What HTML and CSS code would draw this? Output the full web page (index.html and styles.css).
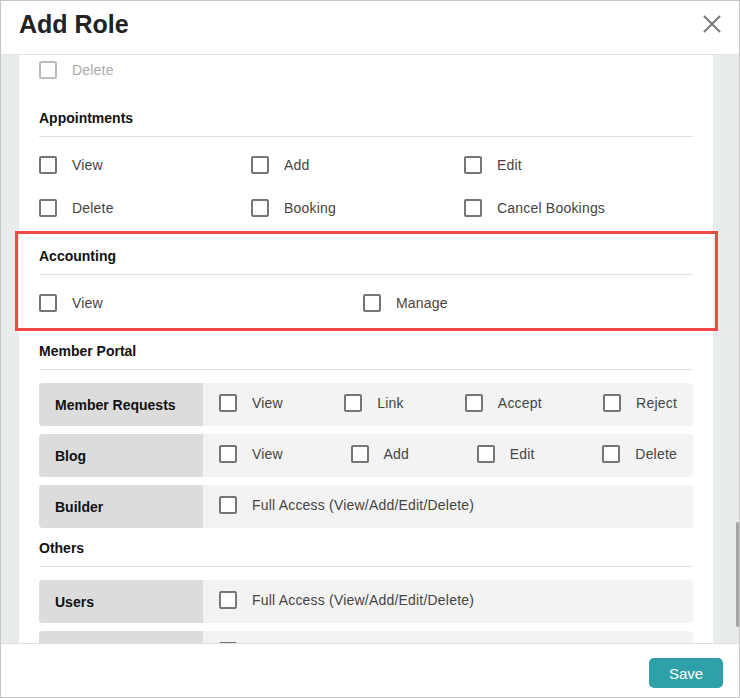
FILE: index.html
```html
<!DOCTYPE html>
<html lang="en">
<head>
    <meta charset="UTF-8">
    <meta name="viewport" content="width=device-width, initial-scale=1.0">
    <title>Add Role</title>
    <link rel="stylesheet" href="styles.css">
</head>
<body>
    <div class="modal">
        <!-- Header -->
        <div class="modal-header">
            <h1>Add Role</h1>
            <button class="close" type="button" aria-label="Close">
                <svg width="18" height="18" viewBox="0 0 18 18"><path d="M1 1L17 17M17 1L1 17" stroke="#777" stroke-width="2" fill="none"/></svg>
            </button>
        </div>

        <!-- Scrolling permissions list -->
        <div class="modal-body">
            <div class="panel">
                <div class="perm-grid cols-3 faded">
                    <label class="check"><span class="box"></span>Delete</label>
                </div>

                <div class="perm-section">
                    <h2>Appointments</h2>
                    <div class="perm-grid cols-3">
                        <label class="check"><span class="box"></span>View</label>
                        <label class="check"><span class="box"></span>Add</label>
                        <label class="check"><span class="box"></span>Edit</label>
                        <label class="check"><span class="box"></span>Delete</label>
                        <label class="check"><span class="box"></span>Booking</label>
                        <label class="check"><span class="box"></span>Cancel Bookings</label>
                    </div>
                </div>

                <div class="perm-section marked">
                    <h2>Accounting</h2>
                    <div class="perm-grid cols-2">
                        <label class="check"><span class="box"></span>View</label>
                        <label class="check"><span class="box"></span>Manage</label>
                    </div>
                </div>

                <div class="perm-section">
                    <h2>Member Portal</h2>
                    <div class="perm-table">
                        <div class="perm-row">
                            <div class="row-name">Member Requests</div>
                            <div class="row-opts spread">
                                <label class="check"><span class="box"></span>View</label>
                                <label class="check"><span class="box"></span>Link</label>
                                <label class="check"><span class="box"></span>Accept</label>
                                <label class="check"><span class="box"></span>Reject</label>
                            </div>
                        </div>
                        <div class="perm-row">
                            <div class="row-name">Blog</div>
                            <div class="row-opts spread">
                                <label class="check"><span class="box"></span>View</label>
                                <label class="check"><span class="box"></span>Add</label>
                                <label class="check"><span class="box"></span>Edit</label>
                                <label class="check"><span class="box"></span>Delete</label>
                            </div>
                        </div>
                        <div class="perm-row">
                            <div class="row-name">Builder</div>
                            <div class="row-opts">
                                <label class="check"><span class="box"></span>Full Access (View/Add/Edit/Delete)</label>
                            </div>
                        </div>
                    </div>
                </div>

                <div class="perm-section after-table">
                    <h2>Others</h2>
                    <div class="perm-table">
                        <div class="perm-row">
                            <div class="row-name">Users</div>
                            <div class="row-opts">
                                <label class="check"><span class="box"></span>Full Access (View/Add/Edit/Delete)</label>
                            </div>
                        </div>
                        <!-- next row, scrolled under the footer -->
                        <div class="perm-row">
                            <div class="row-name"></div>
                            <div class="row-opts">
                                <label class="check"><span class="box"></span></label>
                            </div>
                        </div>
                    </div>
                </div>
            </div>
            <div class="scroll-thumb"></div>
        </div>

        <!-- Footer -->
        <div class="modal-footer">
            <button class="save" type="button">Save</button>
        </div>
    </div>
</body>
</html>
```

FILE: styles.css
```css
body {
    margin: 0;
    padding: 0;
    font-family: 'Liberation Sans', Arial, sans-serif;
    color: #444;
    background-color: #fff;
}
.modal {
    width: 740px;
    height: 698px;
    box-sizing: border-box;
    border: 1px solid #c6c6c6;
    display: flex;
    flex-direction: column;
    background-color: #fff;
}
.modal-header {
    height: 54px;
    box-sizing: border-box;
    border-bottom: 1px solid #e3e3e3;
    padding: 9px 18px 0 18px;
    display: flex;
    justify-content: space-between;
    align-items: flex-start;
}
.modal-header h1 {
    margin: 0;
    font-size: 25px;
    line-height: 29px;
    font-weight: bold;
    color: #222;
}
.close {
    border: none;
    background: none;
    padding: 0;
    margin-top: 5px;
    width: 18px;
    height: 18px;
    cursor: pointer;
}
.close svg {
    display: block;
}
.modal-body {
    position: relative;
    height: 588px;
    overflow: hidden;
    background-color: #e9ecec;
    padding: 0 26px 0 18px;
}
.panel {
    margin-top: -7px; /* list is scrolled a little */
    background-color: #fff;
    padding: 0 20px 20px;
    display: flex;
    flex-direction: column;
}
.perm-section {
    padding-top: 13px;
}
.perm-section.after-table {
    padding-top: 12px;
}
.perm-section h2 {
    margin: 0;
    font-size: 14px;
    line-height: 17px;
    font-weight: bold;
    color: #111;
    padding-bottom: 9px;
    border-bottom: 1px solid #e0e0e0;
}
.perm-section.marked {
    position: relative;
}
.perm-section.marked::after {
    content: '';
    position: absolute;
    top: -4px;
    left: -24px;
    right: -25px;
    bottom: -1px;
    border: 3px solid #f04747;
    pointer-events: none;
}
.perm-grid {
    display: grid;
    grid-auto-rows: 43px;
    padding-bottom: 6px;
}
.perm-section .perm-grid {
    margin-top: 6px;
}
.cols-3 {
    grid-template-columns: 212px 213px 1fr;
}
.cols-2 {
    grid-template-columns: 324px 1fr;
}
.check {
    display: flex;
    align-items: center;
    gap: 15px;
    font-size: 14px;
    letter-spacing: 0.2px;
    color: #444;
    cursor: pointer;
}
.box {
    width: 18px;
    height: 18px;
    box-sizing: border-box;
    border: 2px solid #757575;
    border-radius: 2px;
    background-color: #fff;
    flex-shrink: 0;
}
.faded .check {
    color: #aaa;
}
.faded .box {
    border-color: #bdbdbd;
}
.perm-table {
    margin-top: 13px;
    display: flex;
    flex-direction: column;
    gap: 8px;
}
.perm-row {
    display: flex;
    height: 43px;
    border-radius: 4px;
    overflow: hidden;
    background-color: #f3f3f3;
}
.row-name {
    width: 164px;
    box-sizing: border-box;
    padding-left: 16px;
    background-color: #dcdcdc;
    display: flex;
    align-items: center;
    font-size: 14px;
    font-weight: bold;
    color: #111;
}
.row-opts {
    flex: 1;
    display: flex;
    align-items: center;
    padding: 0 16px 4px 16px;
}
.row-opts.spread {
    justify-content: space-between;
}
.scroll-thumb {
    position: absolute;
    right: 0;
    top: 467px;
    width: 3px;
    height: 105px;
    border-radius: 2px;
    background-color: #a3a3a3;
}
.modal-footer {
    flex: 1;
    border-top: 1px solid #e0e0e0;
    padding: 14px 16px 0 0;
    display: flex;
    justify-content: flex-end;
    align-items: flex-start;
}
.save {
    width: 74px;
    height: 30px;
    border: none;
    border-radius: 5px;
    background-color: #2ea0a7;
    color: #fff;
    font-family: 'Liberation Sans', Arial, sans-serif;
    font-size: 15px;
    cursor: pointer;
}
```
